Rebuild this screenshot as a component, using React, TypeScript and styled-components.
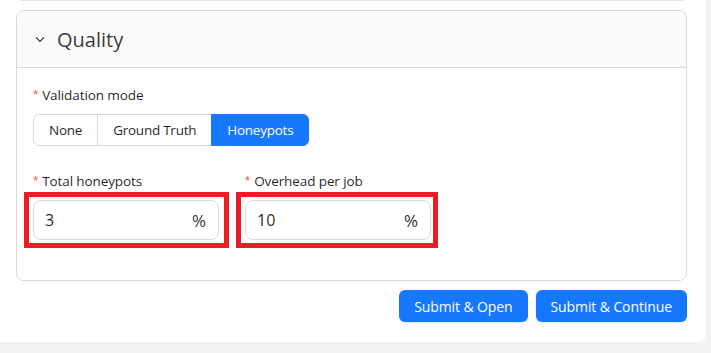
import React from 'react';
import styled, { createGlobalStyle } from 'styled-components';

const GlobalStyle = createGlobalStyle`
  body {
    margin: 0;
    background: #f2f2f2;
    font-family: "Open Sans", "Noto Sans", sans-serif;
    color: rgba(0, 0, 0, 0.88);
  }
`;

export const Card = styled.div`
  width: 706px;
  background: #fff;
  border-radius: 0 0 8px 0;
  padding: 0 19px 20px 16px;
  box-sizing: border-box;
`;

export const PrevPanelEdge = styled.div`
  height: 1px;
  margin: 0 4px;
  background: #e3e3e3;
`;

export const Panel = styled.div`
  margin-top: 9px;
  border: 1px solid #d9d9d9;
  border-radius: 8px;
  overflow: hidden;
`;

export const PanelHeader = styled.div`
  display: flex;
  align-items: center;
  gap: 11px;
  height: 56px;
  padding: 0 17px;
  background: #fafafa;
  border-bottom: 1px solid #d9d9d9;
  font-size: 20px;
  color: rgba(0, 0, 0, 0.8);
`;

export const PanelBody = styled.div`
  padding: 16px;
  background: #fff;
`;

export const FormItem = styled.div`
  margin-bottom: 24px;
`;

export const Label = styled.div`
  font-size: 13.5px;
  line-height: 22px;
  padding-bottom: 8px;
  display: flex;
  align-items: center;
  letter-spacing: -0.1px;
  &::before {
    content: '*';
    color: #ff4d4f;
    margin-right: 4px;
    font-family: SimSun, sans-serif;
  }
`;

export const Segmented = styled.div`
  display: inline-flex;
`;

export const SegButton = styled.div<{ $active?: boolean }>`
  height: 32px;
  padding: 0 15px;
  display: flex;
  align-items: center;
  font-size: 13.5px;
  letter-spacing: -0.25px;
  border: 1px solid ${(p) => (p.$active ? '#1677ff' : '#d9d9d9')};
  background: ${(p) => (p.$active ? '#1677ff' : '#fff')};
  color: ${(p) => (p.$active ? '#fff' : 'rgba(0,0,0,0.88)')};
  box-sizing: border-box;
  & + & {
    margin-left: -1px;
  }
  &:first-child {
    border-radius: 6px 0 0 6px;
  }
  &:last-child {
    border-radius: 0 6px 6px 0;
  }
`;

export const FieldRow = styled.div`
  display: flex;
  gap: 26px;
`;

export const FieldCol = styled.div`
  width: 186px;
`;

export const InputBox = styled.div`
  position: relative;
  height: 40px;
  border: 1px solid #d9d9d9;
  border-radius: 8px;
  display: flex;
  align-items: center;
  padding: 0 12px 0 11px;
  box-sizing: border-box;
  font-size: 16px;
`;

export const InputValue = styled.span`
  flex: 1;
`;

export const Suffix = styled.span`
  font-size: 17px;
  color: rgba(0, 0, 0, 0.85);
`;

export const Highlight = styled.div<{ $right: number }>`
  position: absolute;
  left: -10px;
  top: -9px;
  bottom: -9px;
  right: ${(p) => -p.$right}px;
  border: 5px solid #ec1c24;
  pointer-events: none;
`;

export const Actions = styled.div`
  display: flex;
  justify-content: flex-end;
  gap: 8px;
  margin-top: 9px;
`;

export const PrimaryButton = styled.button`
  height: 32px;
  padding: 0 15px;
  border: none;
  border-radius: 6px;
  background: #1677ff;
  color: #fff;
  font-family: inherit;
  font-size: 14px;
  letter-spacing: -0.1px;
  box-shadow: 0 2px 0 rgba(5, 145, 255, 0.1);
  cursor: pointer;
`;

const Chevron = () => (
  <svg width="12" height="12" viewBox="0 0 12 12">
    <path d="M2 4.3 L6 8.3 L10 4.3" fill="none" stroke="rgba(0,0,0,0.8)" strokeWidth="1.2" />
  </svg>
);

const Field = ({ label, value, right }: { label: string; value: string; right: number }) => (
  <FieldCol>
    <Label>{label}</Label>
    <InputBox>
      <InputValue>{value}</InputValue>
      <Suffix>%</Suffix>
      <Highlight $right={right} />
    </InputBox>
  </FieldCol>
);

export default function App() {
  return (
    <>
      <GlobalStyle />
      <Card>
        <PrevPanelEdge />
        <Panel>
          <PanelHeader>
            <Chevron />
            <span>Quality</span>
          </PanelHeader>
          <PanelBody>
            <FormItem>
              <Label>Validation mode</Label>
              <Segmented>
                <SegButton>None</SegButton>
                <SegButton>Ground Truth</SegButton>
                <SegButton $active>Honeypots</SegButton>
              </Segmented>
            </FormItem>
            <FormItem>
              <FieldRow>
                <Field label="Total honeypots" value="3" right={11} />
                <Field label="Overhead per job" value="10" right={8} />
              </FieldRow>
            </FormItem>
          </PanelBody>
        </Panel>
        <Actions>
          <PrimaryButton>Submit &amp; Open</PrimaryButton>
          <PrimaryButton>Submit &amp; Continue</PrimaryButton>
        </Actions>
      </Card>
    </>
  );
}
